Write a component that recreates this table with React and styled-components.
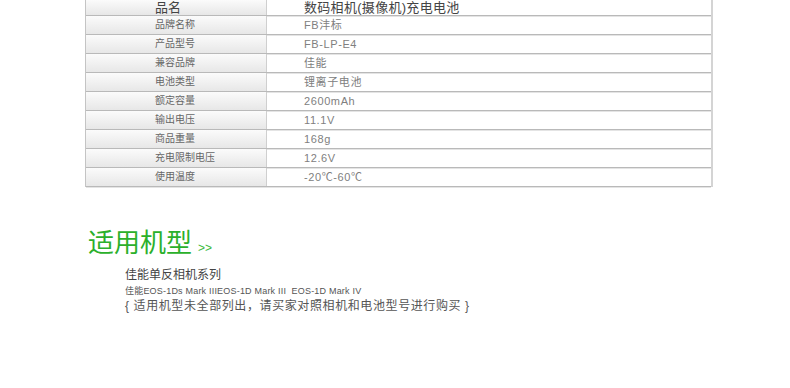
import React from 'react';
import styled, { createGlobalStyle } from 'styled-components';

const specs = [
    ['品牌名称', 'FB沣标'],
    ['产品型号', 'FB-LP-E4'],
    ['兼容品牌', '佳能'],
    ['电池类型', '锂离子电池'],
    ['额定容量', '2600mAh'],
    ['输出电压', '11.1V'],
    ['商品重量', '168g'],
    ['充电限制电压', '12.6V'],
    ['使用温度', '-20℃-60℃'],
];

function App() {
    return (
        <Page>
            <GlobalStyle />
            <SpecTable>
                <Row>
                    <Label head>品名</Label>
                    <Value head>数码相机(摄像机)充电电池</Value>
                </Row>
                {specs.map(([k, v]) => (
                    <Row key={k}>
                        <Label>{k}</Label>
                        <Value>{v}</Value>
                    </Row>
                ))}
            </SpecTable>
            <Section>
                <TitleLine>
                    <Title>适用机型</Title>
                    <Arrows>&gt;&gt;</Arrows>
                </TitleLine>
                <Series>佳能单反相机系列</Series>
                <Models>佳能EOS-1Ds Mark IIIEOS-1D Mark III&nbsp; EOS-1D Mark IV</Models>
                <Note>{'{ 适用机型未全部列出，请买家对照相机和电池型号进行购买 }'}</Note>
            </Section>
        </Page>
    );
}

const GlobalStyle = createGlobalStyle`
    body {
        margin: 0;
        background: #fff;
        font-family: "Liberation Sans", "Noto Sans CJK SC", sans-serif;
    }
`;

const Page = styled.div`
    width: 790px;
    height: 388px;
    overflow: hidden;
`;

const SpecTable = styled.div`
    margin-left: 85px;
    width: 625px;
    border-left: 1px solid #c4c4c4;
    border-right: 2px solid #d4d4d4;
`;

const Row = styled.div`
    display: grid;
    grid-template-columns: 181px 1fr;
    border-bottom: 1px solid #b9b9b9;
    box-shadow: 0 1px 0 #e4e4e4;
    &:first-child > div {
        height: 15px;
        line-height: 15px;
    }
`;

const Label = styled.div`
    height: 18px;
    line-height: 18px;
    padding-left: 69px;
    border-right: 1px solid #cfcfcf;
    background: linear-gradient(#fbfbfb, #e7e7e7);
    color: ${p => (p.head ? '#444' : '#666')};
    font-size: ${p => (p.head ? '13px' : '10px')};
`;

const Value = styled.div`
    height: 18px;
    line-height: 18px;
    padding-left: 37px;
    color: ${p => (p.head ? '#444' : '#808080')};
    font-size: ${p => (p.head ? '13px' : '11px')};
    letter-spacing: ${p => (p.head ? '0.3px' : '0.6px')};
`;

const Section = styled.div`
    margin-top: 41px;
    padding-left: 88px;
`;

const TitleLine = styled.div`
    display: flex;
    align-items: baseline;
`;

const Title = styled.div`
    font-size: 26px;
    line-height: 30px;
    color: #2bb02b;
`;

const Arrows = styled.span`
    margin-left: 6px;
    font-size: 12px;
    color: #3cb83c;
`;

const Series = styled.div`
    margin: 8px 0 0 37px;
    font-size: 12px;
    line-height: 18px;
    color: #444;
`;

const Models = styled.div`
    margin-left: 37px;
    font-size: 9px;
    line-height: 14px;
    letter-spacing: 0.2px;
    color: #555;
`;

const Note = styled.div`
    margin-left: 37px;
    font-size: 12px;
    line-height: 16px;
    letter-spacing: 0.6px;
    color: #555;
`;

export default App;
